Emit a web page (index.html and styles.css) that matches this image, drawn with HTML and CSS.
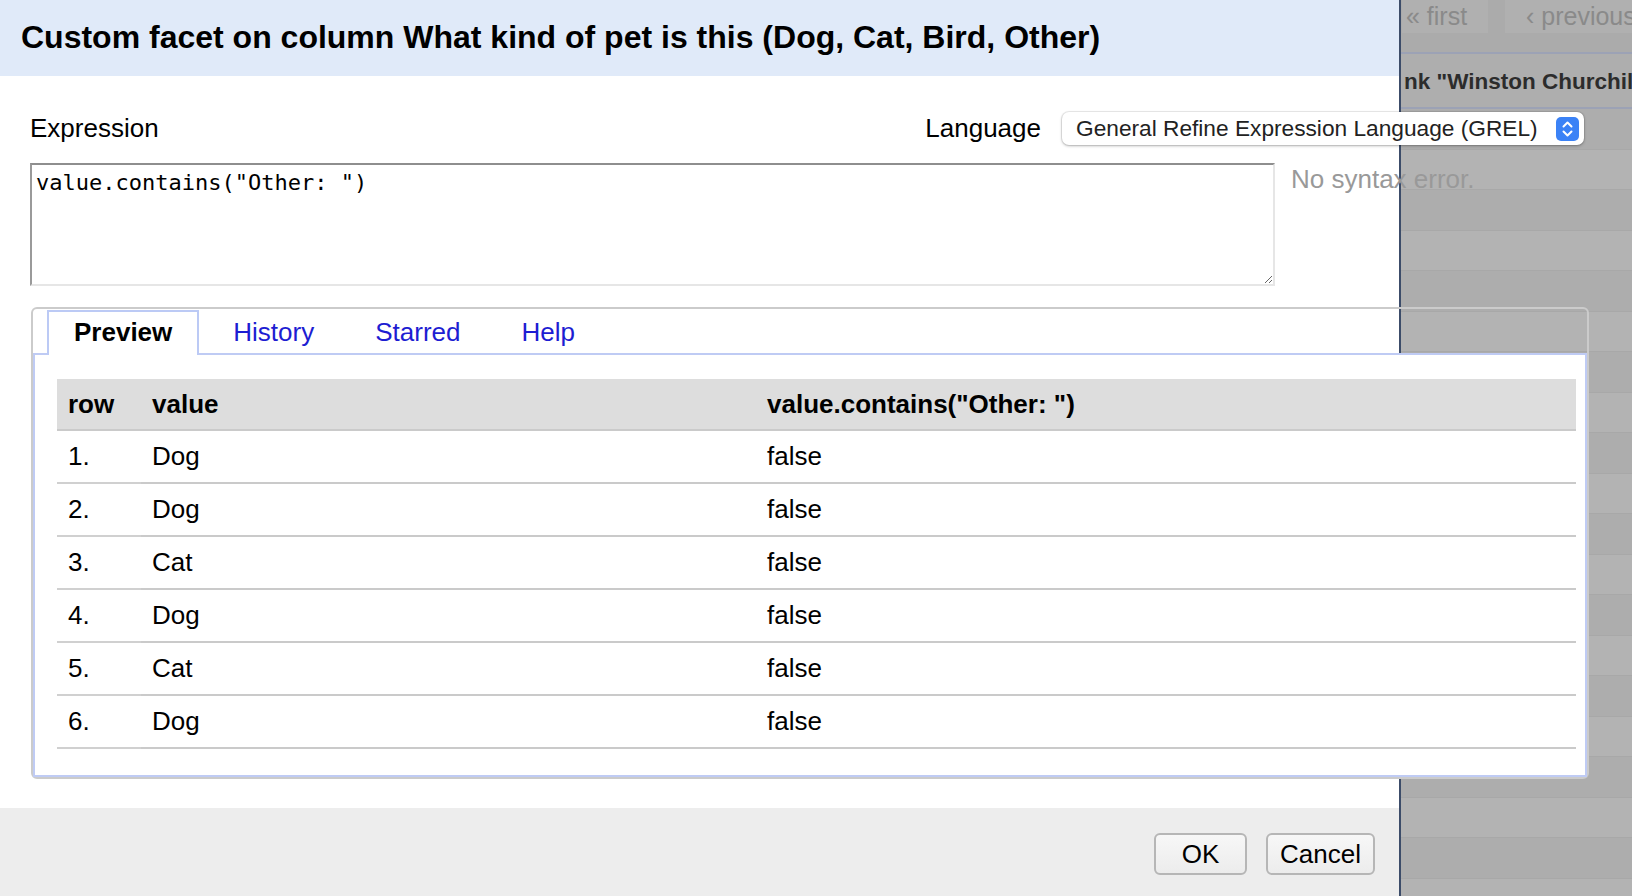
FILE: index.html
```html
<!DOCTYPE html>
<html>
<head>
<meta charset="utf-8">
<link rel="stylesheet" href="styles.css">
</head>
<body>
<div class="screen">
  <div class="dialog">
    <div class="dialog-header">Custom facet on column What kind of pet is this (Dog, Cat, Bird, Other)</div>
    <div class="dialog-body">
      <div class="expr-row">
        <span class="label">Expression</span>
        <div class="lang">
          <span class="label">Language</span>
          <div class="select">
            <span class="select-text">General Refine Expression Language (GREL)</span>
            <span class="stepper">
              <svg width="23" height="24" viewBox="0 0 23 24"><path d="M7.5 9.5 L11.5 5.5 L15.5 9.5" fill="none" stroke="#fff" stroke-width="2" stroke-linecap="round" stroke-linejoin="round"/><path d="M7.5 14.5 L11.5 18.5 L15.5 14.5" fill="none" stroke="#fff" stroke-width="2" stroke-linecap="round" stroke-linejoin="round"/></svg>
            </span>
          </div>
        </div>
      </div>
      <div class="editor-row">
        <textarea class="expr" spellcheck="false">value.contains("Other: ")</textarea>
        <div class="status">No syntax error.</div>
      </div>
      <div class="tabs">
        <ul class="tab-nav">
          <li class="tab active">Preview</li>
          <li class="tab">History</li>
          <li class="tab">Starred</li>
          <li class="tab">Help</li>
        </ul>
        <div class="tab-panel">
          <div class="scroll">
            <table class="preview">
              <thead>
                <tr><th class="c-row">row</th><th class="c-val">value</th><th>value.contains("Other: ")</th></tr>
              </thead>
              <tbody>
                <tr><td class="c-row">1.</td><td>Dog</td><td>false</td></tr>
                <tr><td class="c-row">2.</td><td>Dog</td><td>false</td></tr>
                <tr><td class="c-row">3.</td><td>Cat</td><td>false</td></tr>
                <tr><td class="c-row">4.</td><td>Dog</td><td>false</td></tr>
                <tr><td class="c-row">5.</td><td>Cat</td><td>false</td></tr>
                <tr><td class="c-row">6.</td><td>Dog</td><td>false</td></tr>
                <tr><td class="c-row">7.</td><td>Bird</td><td>false</td></tr>
              </tbody>
            </table>
          </div>
        </div>
      </div>
    </div>
    <div class="dialog-footer">
      <button class="btn btn-ok">OK</button>
      <button class="btn">Cancel</button>
    </div>
  </div>
  <div class="backdrop">
    <div class="pager">
      <span class="pager-btn first">« first</span>
      <span class="pager-btn prev">‹ previous</span>
    </div>
    <div class="bg-head">nk "Winston Churchill"</div>
    <div class="bg-rows">
      <div class="bg-row"></div><div class="bg-row"></div><div class="bg-row"></div><div class="bg-row"></div>
      <div class="bg-row"></div><div class="bg-row"></div><div class="bg-row"></div><div class="bg-row"></div>
      <div class="bg-row"></div><div class="bg-row"></div><div class="bg-row"></div><div class="bg-row"></div>
      <div class="bg-row"></div><div class="bg-row"></div><div class="bg-row"></div><div class="bg-row"></div>
      <div class="bg-row"></div><div class="bg-row"></div><div class="bg-row"></div><div class="bg-row"></div>
    </div>
  </div>
</div>
</body>
</html>
```

FILE: styles.css
```css
html, body {
  margin: 0;
  padding: 0;
}
body {
  width: 1632px;
  height: 896px;
  overflow: hidden;
  font-family: "Liberation Sans", Arial, Helvetica, sans-serif;
  font-size: 26px;
  color: #000;
  background: #acacac;
}
.screen {
  display: flex;
  width: 1632px;
  height: 896px;
}

/* dialog */
.dialog {
  flex: none;
  width: 1401px;
  box-sizing: border-box;
  border-right: 2px solid #3c4c69;
  background: #fff;
  display: flex;
  flex-direction: column;
  position: relative;
  z-index: 2;
}
.dialog-header {
  flex: none;
  height: 76px;
  background: #e0eaf9;
  display: flex;
  align-items: center;
  padding-left: 21px;
  padding-bottom: 2px;
  box-sizing: border-box;
  font-weight: bold;
  font-size: 32px;
  white-space: nowrap;
}
.dialog-body {
  flex: 1;
  padding-left: 30px;
  padding-top: 36px;
  box-sizing: border-box;
}
.expr-row {
  width: 1559px;
  height: 33px;
  display: flex;
  align-items: center;
  justify-content: space-between;
  padding-right: 5px;
  box-sizing: border-box;
}
.label {
  white-space: nowrap;
}
.lang {
  display: flex;
  align-items: center;
  gap: 21px;
}
.select {
  flex: none;
  width: 522px;
  height: 33px;
  box-sizing: border-box;
  background: #fff;
  border-radius: 7px;
  box-shadow: 0 0 0 1px rgba(0, 0, 0, 0.07), 0 1px 3px rgba(0, 0, 0, 0.28);
  display: flex;
  align-items: center;
  justify-content: space-between;
  padding: 0 5px 0 14px;
}
.select-text {
  font-size: 22.7px;
  color: #222;
  white-space: nowrap;
}
.stepper {
  width: 23px;
  height: 24px;
  border-radius: 5px;
  background: #3b82f6;
  display: flex;
}
.editor-row {
  width: 1559px;
  margin-top: 18px;
  display: flex;
  align-items: flex-start;
  gap: 14px;
}
.expr {
  flex: none;
  width: 1245px;
  height: 123px;
  box-sizing: border-box;
  margin: 0;
  border: 2px solid;
  border-color: #8e8e8e #e6e6e6 #e6e6e6 #9a9a9a;
  padding: 5px 4px;
  font-family: "DejaVu Sans Mono", Menlo, monospace;
  font-size: 22px;
  color: #000;
  background: #fff;
  outline: none;
}
.status {
  flex: none;
  margin-top: 1px;
  color: #999;
  white-space: nowrap;
  padding-left: 2px;
}

/* tabs */
.tabs {
  margin-top: 21px;
  margin-left: 1px;
  width: 1558px;
  height: 472px;
  box-sizing: border-box;
  border: 2px solid #cbcbcb;
  border-radius: 6px;
  padding-top: 1px;
  display: flex;
  flex-direction: column;
}
.tab-nav {
  list-style: none;
  margin: 0;
  padding: 0 0 0 14px;
  display: flex;
  gap: 7px;
  height: 43px;
  flex: none;
}
.tab {
  height: 45px;
  box-sizing: border-box;
  border: 2px solid transparent;
  border-bottom: none;
  padding: 0 25px 3px 25px;
  display: flex;
  align-items: center;
  position: relative;
  z-index: 1;
  color: #1d1dd2;
}
.tab.active {
  background: #fff;
  border-color: #bccaf5;
  color: #000;
  font-weight: bold;
}
.tab-panel {
  flex: 1;
  background: #fff;
  border: 2px solid #bfcbf4;
  padding: 24px 9px 0 22px;
  overflow: hidden;
}
.scroll {
  height: 384px;
  overflow: hidden;
}
.preview {
  width: 100%;
  border-collapse: collapse;
}
.preview th {
  height: 50px;
  background: #ddd;
  text-align: left;
  font-weight: bold;
  padding: 0 11px;
  border-bottom: 2px solid #cacaca;
  white-space: nowrap;
}
.preview td {
  height: 51px;
  padding: 0 11px;
  border-bottom: 2px solid #cacaca;
}
.preview td.c-row {
  border-bottom-color: #d0d0d0;
}
.c-row {
  width: 62px;
}
.c-val {
  width: 593px;
}

/* footer */
.dialog-footer {
  flex: none;
  height: 88px;
  background: #ededed;
  display: flex;
  justify-content: flex-end;
  align-items: flex-start;
  gap: 19px;
  padding: 25px 24px 0 0;
  box-sizing: border-box;
}
.btn {
  height: 42px;
  box-sizing: border-box;
  min-width: 93px;
  padding: 0 12px;
  font-family: "Liberation Sans", Arial, sans-serif;
  font-size: 26px;
  color: #000;
  background: linear-gradient(#f7f7f7, #ececec);
  border: 2px solid #b6b6b6;
  border-radius: 6px;
}

/* page behind the dialog, under the overlay */
.backdrop {
  flex: 1;
  overflow: hidden;
  position: relative;
  z-index: 1;
  background: #ababab;
  display: flex;
  flex-direction: column;
}
.pager {
  height: 52px;
  flex: none;
  display: flex;
  align-items: flex-start;
  gap: 17px;
  padding-left: 1px;
  border-bottom: 2px solid #9ca2b5;
}
.pager-btn {
  flex: none;
  height: 33px;
  display: flex;
  align-items: center;
  background: #b0b0b0;
  color: #8a8a8a;
  font-size: 25px;
  white-space: nowrap;
}
.pager-btn.first {
  width: 86px;
  padding-left: 4px;
  box-sizing: border-box;
}
.pager-btn.prev {
  padding-left: 21px;
  padding-right: 10px;
}
.bg-head {
  height: 55px;
  flex: none;
  display: flex;
  align-items: center;
  padding-left: 3px;
  padding-top: 2px;
  box-sizing: border-box;
  background: #aeaeae;
  font-weight: bold;
  font-size: 22.5px;
  color: #2c2c2c;
  white-space: nowrap;
  border-bottom: 2px solid #9ca2b5;
}
.bg-row {
  flex: none;
  height: 40.5px;
  background: #adadad;
  border-bottom: 1px solid #a8a8a8;
  box-sizing: border-box;
}
.bg-row:nth-child(even) {
  background: #b3b3b3;
}
```
